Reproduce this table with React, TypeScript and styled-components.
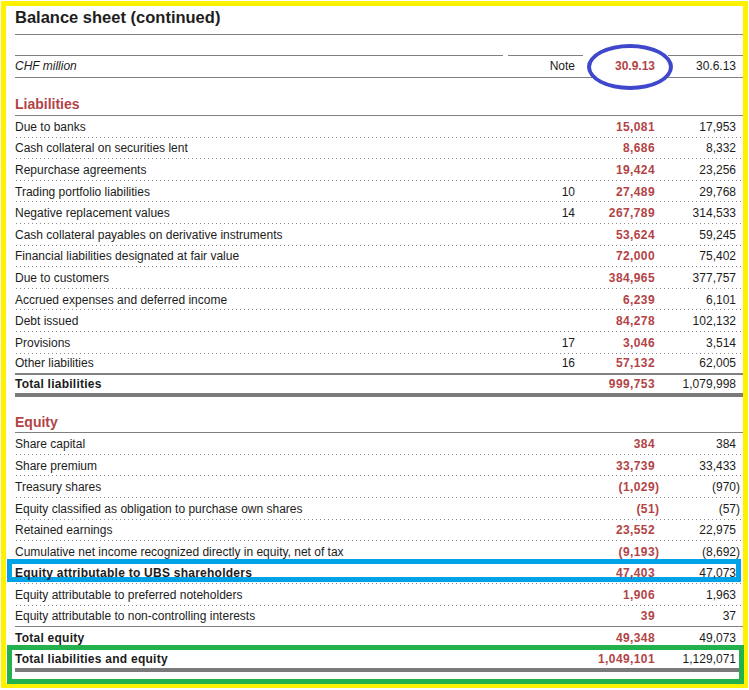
import React from 'react';
import styled, { createGlobalStyle, css } from 'styled-components';

type Rule = 'dotted' | 'solid' | 'double' | 'thick' | 'none';

interface Line {
  label: string;
  note?: string;
  current: string;
  prior: string;
  bold?: boolean;
  rule?: Rule;
  mark?: 'blue' | 'green';
}

const liabilities: Line[] = [
  { label: 'Due to banks', current: '15,081', prior: '17,953' },
  { label: 'Cash collateral on securities lent', current: '8,686', prior: '8,332' },
  { label: 'Repurchase agreements', current: '19,424', prior: '23,256' },
  { label: 'Trading portfolio liabilities', note: '10', current: '27,489', prior: '29,768' },
  { label: 'Negative replacement values', note: '14', current: '267,789', prior: '314,533' },
  { label: 'Cash collateral payables on derivative instruments', current: '53,624', prior: '59,245' },
  { label: 'Financial liabilities designated at fair value', current: '72,000', prior: '75,402' },
  { label: 'Due to customers', current: '384,965', prior: '377,757' },
  { label: 'Accrued expenses and deferred income', current: '6,239', prior: '6,101' },
  { label: 'Debt issued', current: '84,278', prior: '102,132' },
  { label: 'Provisions', note: '17', current: '3,046', prior: '3,514' },
  { label: 'Other liabilities', note: '16', current: '57,132', prior: '62,005', rule: 'double' },
  { label: 'Total liabilities', current: '999,753', prior: '1,079,998', bold: true, rule: 'thick' },
];

const equity: Line[] = [
  { label: 'Share capital', current: '384', prior: '384' },
  { label: 'Share premium', current: '33,739', prior: '33,433' },
  { label: 'Treasury shares', current: '(1,029)', prior: '(970)' },
  { label: 'Equity classified as obligation to purchase own shares', current: '(51)', prior: '(57)' },
  { label: 'Retained earnings', current: '23,552', prior: '22,975' },
  { label: 'Cumulative net income recognized directly in equity, net of tax', current: '(9,193)', prior: '(8,692)' },
  { label: 'Equity attributable to UBS shareholders', current: '47,403', prior: '47,073', bold: true, mark: 'blue' },
  { label: 'Equity attributable to preferred noteholders', current: '1,906', prior: '1,963' },
  { label: 'Equity attributable to non-controlling interests', current: '39', prior: '37', rule: 'solid' },
  { label: 'Total equity', current: '49,348', prior: '49,073', bold: true, rule: 'none' },
  { label: 'Total liabilities and equity', current: '1,049,101', prior: '1,129,071', bold: true, rule: 'thick', mark: 'green' },
];

const Amount = ({ value }: { value: string }) => {
  if (value.startsWith('(')) {
    return (
      <>
        ({value.slice(1, -1)}
        <Hang>)</Hang>
      </>
    );
  }
  return <>{value}</>;
};

const Section = ({ title, lines }: { title: string; lines: Line[] }) => (
  <>
    <SectionTitle>{title}</SectionTitle>
    {lines.map((line) => (
      <DataRow key={line.label} $rule={line.rule ?? 'dotted'} $tall={line.rule === 'thick'}>
        <Label $bold={line.bold}>{line.label}</Label>
        <Cell>{line.note}</Cell>
        <Cell $current>
          <Amount value={line.current} />
        </Cell>
        <Cell>
          <Amount value={line.prior} />
        </Cell>
        {line.mark && <Mark $kind={line.mark} />}
      </DataRow>
    ))}
  </>
);

const App = () => (
  <>
    <GlobalStyle />
    <Frame>
      <Title>Balance sheet (continued)</Title>
      <Table>
        <HeaderRow>
          <HeadCell $first>
            <Unit>CHF million</Unit>
          </HeadCell>
          <HeadCell>Note</HeadCell>
          <HeadCell $bare>
            <Ring />
            <CurrentDate>30.9.13</CurrentDate>
          </HeadCell>
          <HeadCell>30.6.13</HeadCell>
        </HeaderRow>
        <Section title="Liabilities" lines={liabilities} />
        <Section title="Equity" lines={equity} />
      </Table>
    </Frame>
  </>
);

export default App;

const RED = '#b24446';
const RULE = '#808080';

const GlobalStyle = createGlobalStyle`
  html, body {
    margin: 0;
    padding: 0;
    background: #ffffff;
  }
  body {
    font-family: 'Liberation Sans', Arial, sans-serif;
    font-size: 12px;
    color: #1c1c1c;
  }
`;

const Frame = styled.div`
  box-sizing: border-box;
  margin: 1px 0 0 1px;
  width: 747px;
  height: 687px;
  border: 5px solid #fff200;
  padding-left: 9px;
  background: #ffffff;
`;

const Title = styled.div`
  width: 728px;
  padding: 1px 0 7px;
  line-height: 20px;
  font-size: 16.5px;
  font-weight: bold;
  color: #1e1e1e;
  border-bottom: 1px solid ${RULE};
`;

const Table = styled.div`
  width: 728px;
`;

const grid = css`
  display: grid;
  grid-template-columns: 488px 80px 80px 80px;
  & > :nth-child(4) {
    padding-right: 7px;
  }
`;

const HeaderRow = styled.div`
  ${grid};
  margin-top: 20px;
  border-bottom: 1px solid ${RULE};
`;

const HeadCell = styled.div<{ $first?: boolean; $bare?: boolean }>`
  position: relative;
  height: 21px;
  line-height: 21px;
  margin-left: ${(p) => (p.$first ? '0' : '5px')};
  padding-right: 8px;
  text-align: ${(p) => (p.$first ? 'left' : 'right')};
  border-top: 1px solid ${(p) => (p.$bare ? 'transparent' : RULE)};
`;

const Unit = styled.span`
  font-style: italic;
`;

const Ring = styled.div`
  position: absolute;
  left: -1px;
  top: -12px;
  width: 86px;
  height: 46px;
  box-sizing: border-box;
  border: 4px solid #3f48cc;
  border-radius: 50%;
  background: #ffffff;
  z-index: 1;
`;

const CurrentDate = styled.span`
  position: relative;
  z-index: 2;
  color: ${RED};
  font-weight: bold;
`;

const SectionTitle = styled.div`
  box-sizing: border-box;
  height: 22px;
  margin-top: 16px;
  line-height: 21px;
  font-size: 14px;
  font-weight: bold;
  color: ${RED};
  border-bottom: 1px solid ${RULE};

  & ~ & {
    margin-top: 15px;
    height: 21px;
    line-height: 20px;
  }
`;

const ruleStyle = (rule: Rule) => {
  switch (rule) {
    case 'dotted':
      return css`
        background-image: linear-gradient(to right, #8c8c8c 1px, transparent 1px);
        background-size: 4px 1px;
        background-repeat: repeat-x;
        background-position: 1px bottom;
      `;
    case 'solid':
      return css`
        border-bottom: 1px solid ${RULE};
      `;
    case 'double':
      return css`
        border-bottom: 2px solid ${RULE};
      `;
    case 'thick':
      return css`
        border-bottom: 4px solid #7a7a7a;
      `;
    default:
      return css``;
  }
};

const DataRow = styled.div<{ $rule: Rule; $tall: boolean }>`
  ${grid};
  position: relative;
  box-sizing: border-box;
  height: ${(p) => (p.$tall ? '22px' : '21.6px')};
  align-items: center;
  ${(p) => ruleStyle(p.$rule)};

  &:last-child {
    height: 23px;
  }
`;

const Label = styled.div<{ $bold?: boolean }>`
  position: relative;
  z-index: 4;
  white-space: nowrap;
  font-weight: ${(p) => (p.$bold ? 'bold' : 'normal')};
  letter-spacing: ${(p) => (p.$bold ? '0.25px' : '0')};
`;

const Cell = styled.div<{ $current?: boolean }>`
  position: relative;
  z-index: 4;
  margin-left: 5px;
  padding-right: 8px;
  text-align: right;
  white-space: nowrap;
  color: ${(p) => (p.$current ? RED : '#1c1c1c')};
  font-weight: ${(p) => (p.$current ? 'bold' : 'normal')};
  letter-spacing: ${(p) => (p.$current ? '0.4px' : '0')};
`;

const Hang = styled.span`
  display: inline-block;
  width: 0;
  text-align: left;
`;

const Mark = styled.div<{ $kind: 'blue' | 'green' }>`
  position: absolute;
  z-index: 3;
  box-sizing: border-box;
  left: -8px;
  top: -4px;
  right: ${(p) => (p.$kind === 'blue' ? '2px' : '-1px')};
  height: ${(p) => (p.$kind === 'blue' ? '23px' : '39px')};
  border: 5px solid ${(p) => (p.$kind === 'blue' ? '#00a2e8' : '#22b14c')};
  pointer-events: none;
`;
